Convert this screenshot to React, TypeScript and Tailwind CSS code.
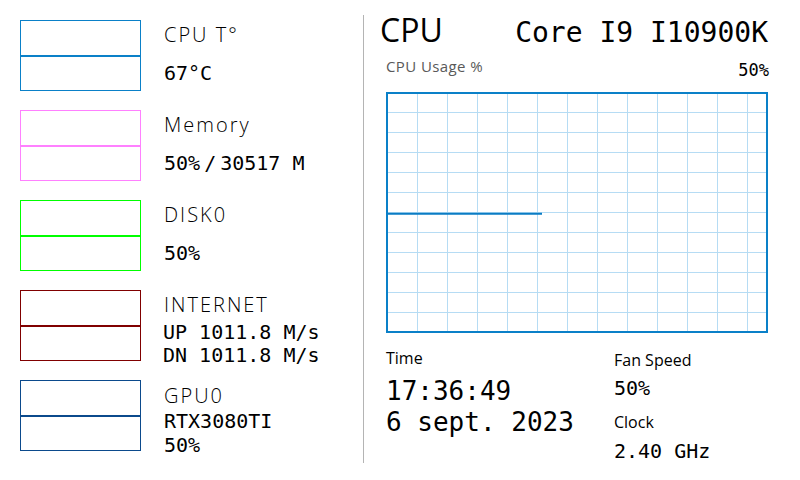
import React from 'react';

type Row = {
  color: string;
  label: string;
  values: React.ReactNode[];
  kind: 'basic' | 'net' | 'gpu';
};

const rows: Row[] = [
  { color: '#0a80c8', label: 'CPU T°', values: ['67°C'], kind: 'basic' },
  {
    color: '#ff80ff',
    label: 'Memory',
    values: [
      <>
        50%<span className="px-[4px]">/</span>30517 M
      </>,
    ],
    kind: 'basic',
  },
  { color: '#00ff00', label: 'DISK0', values: ['50%'], kind: 'basic' },
  { color: '#800000', label: 'INTERNET', values: ['UP 1011.8 M/s', 'DN 1011.8 M/s'], kind: 'net' },
  { color: '#0b4a8c', label: 'GPU0', values: ['RTX3080TI', '50%'], kind: 'gpu' },
];

// gauge frame: top half, 2px divider, bottom half
function Gauge({ color }: { color: string }) {
  return (
    <div className="w-[121px] h-[71px] border flex flex-col shrink-0" style={{ borderColor: color }}>
      <div className="h-[34px]" />
      <div className="h-[2px]" style={{ backgroundColor: color }} />
      <div className="flex-1" />
    </div>
  );
}

function SensorRow({ row }: { row: Row }) {
  const valueCls = "text-[20px] whitespace-pre font-['DejaVu_Sans_Mono',monospace]";
  return (
    <div className="flex h-[71px]">
      <Gauge color={row.color} />
      <div className="ml-[23px] flex flex-col text-black">
        <div
          className={
            row.kind === 'gpu'
              ? "pt-[4px] text-[20px] leading-[24px] font-light tracking-[2px]"
              : "pt-[3px] text-[20px] leading-[24px] font-light tracking-[2px]"
          }
        >
          {row.label}
        </div>
        {row.kind === 'basic' && <div className={`mt-[14px] leading-[24px] ${valueCls}`}>{row.values[0]}</div>}
        {row.kind === 'net' && (
          <div className={`mt-[4px] flex flex-col leading-[23px] ${valueCls}`}>
            {row.values.map((v, i) => (
              <span key={i} className="-ml-[1px]">{v}</span>
            ))}
          </div>
        )}
        {row.kind === 'gpu' && (
          <div className={`mt-[1px] flex flex-col leading-[24px] ${valueCls}`}>
            {row.values.map((v, i) => (
              <span key={i}>{v}</span>
            ))}
          </div>
        )}
      </div>
    </div>
  );
}

function UsageGraph() {
  const w = 382;
  const h = 241;
  const xs = Array.from({ length: 12 }, (_, i) => 31.5 + i * 30);
  const ys = Array.from({ length: 11 }, (_, i) => 20.5 + i * 20);
  return (
    <svg width={w} height={h} className="block">
      {xs.map((x) => (
        <line key={`v${x}`} x1={x} y1={0} x2={x} y2={h} stroke="#b6dcf4" strokeWidth={1} />
      ))}
      {ys.map((y) => (
        <line key={`h${y}`} x1={0} y1={y} x2={w} y2={y} stroke="#b6dcf4" strokeWidth={1} />
      ))}
      <line x1={1} y1={121.7} x2={156} y2={121.7} stroke="#0a7cc4" strokeWidth={2} />
      <rect x={1} y={1} width={w - 2} height={h - 2} fill="none" stroke="#0a80c8" strokeWidth={2} />
    </svg>
  );
}

export default function App() {
  return (
    <div className="w-[800px] h-[480px] bg-white flex overflow-hidden text-black font-['Open_Sans','Noto_Sans',sans-serif]">
      {/* sensors */}
      <div className="w-[363px] shrink-0 pl-[20px] pt-[20px] flex flex-col gap-[19px]">
        {rows.map((r) => (
          <SensorRow key={r.label} row={r} />
        ))}
      </div>

      <div className="w-px h-[448px] mt-[15px] bg-[#b4b4b4] shrink-0" />

      {/* cpu panel */}
      <div className="flex-1 pl-[22px] pr-[32px] flex flex-col">
        <div className="pt-[10px] h-[50px] flex items-baseline justify-between">
          <span className="-ml-[6px] text-[32px] leading-[40px]">CPU</span>
          <span className="text-[28px] leading-[40px] font-['DejaVu_Sans_Mono',monospace]">Core I9 I10900K</span>
        </div>

        <div className="mt-[7px] h-[20px] flex items-start justify-between">
          <span className="text-[15px] leading-[18px] text-[#595959] tracking-[0.4px]">CPU Usage %</span>
          <span className="mt-[3px] -mr-[1px] text-[17px] leading-[20px] font-['DejaVu_Sans_Mono',monospace]">50%</span>
        </div>

        <div className="mt-[15px]">
          <UsageGraph />
        </div>

        <div className="flex pt-[15px]">
          <div className="w-[228px] flex flex-col font-['DejaVu_Sans_Mono',monospace]">
            <span className="text-[16px] leading-[20px] font-['Open_Sans',sans-serif]">Time</span>
            <span className="mt-[8px] text-[26px] leading-[31px]">17:36:49</span>
            <span className="text-[26px] leading-[31px] whitespace-pre">6 sept. 2023</span>
          </div>
          <div className="flex flex-col pt-[2px] font-['DejaVu_Sans_Mono',monospace]">
            <span className="text-[16px] leading-[20px] font-['Open_Sans',sans-serif]">Fan Speed</span>
            <span className="mt-[6px] text-[20px] leading-[24px]">50%</span>
            <span className="mt-[12px] text-[16px] leading-[20px] font-['Open_Sans',sans-serif]">Clock</span>
            <span className="mt-[7px] text-[20px] leading-[24px] whitespace-pre">2.40 GHz</span>
          </div>
        </div>
      </div>
    </div>
  );
}
